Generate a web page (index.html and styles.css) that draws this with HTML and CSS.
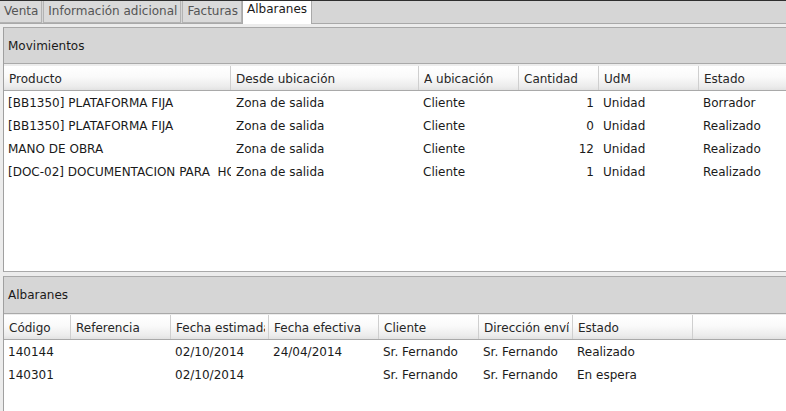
FILE: index.html
```html
<!DOCTYPE html>
<html lang="es">
<head>
<meta charset="utf-8">
<title>Albaranes</title>
<link rel="stylesheet" href="styles.css">
</head>
<body>
<div class="window">
  <div class="tabs">
    <div class="tab">Venta</div>
    <div class="tab">Información adicional</div>
    <div class="tab">Facturas</div>
    <div class="tab active">Albaranes</div>
  </div>
  <div class="content">
    <section class="group moves">
      <div class="group-title">Movimientos</div>
      <div class="table">
        <div class="row head cols-moves">
          <div class="cell"><span>Producto</span></div>
          <div class="cell"><span>Desde ubicación</span></div>
          <div class="cell"><span>A ubicación</span></div>
          <div class="cell"><span>Cantidad</span></div>
          <div class="cell"><span>UdM</span></div>
          <div class="cell"><span>Estado</span></div>
        </div>
        <div class="rows">
          <div class="row body cols-moves">
            <div class="cell">[BB1350] PLATAFORMA FIJA</div>
            <div class="cell">Zona de salida</div>
            <div class="cell">Cliente</div>
            <div class="cell num">1</div>
            <div class="cell">Unidad</div>
            <div class="cell">Borrador</div>
          </div>
          <div class="row body cols-moves">
            <div class="cell">[BB1350] PLATAFORMA FIJA</div>
            <div class="cell">Zona de salida</div>
            <div class="cell">Cliente</div>
            <div class="cell num">0</div>
            <div class="cell">Unidad</div>
            <div class="cell">Realizado</div>
          </div>
          <div class="row body cols-moves">
            <div class="cell">MANO DE OBRA</div>
            <div class="cell">Zona de salida</div>
            <div class="cell">Cliente</div>
            <div class="cell num">12</div>
            <div class="cell">Unidad</div>
            <div class="cell">Realizado</div>
          </div>
          <div class="row body cols-moves">
            <div class="cell">[DOC-02] DOCUMENTACION PARA  HOMOLOGACION</div>
            <div class="cell">Zona de salida</div>
            <div class="cell">Cliente</div>
            <div class="cell num">1</div>
            <div class="cell">Unidad</div>
            <div class="cell">Realizado</div>
          </div>
        </div>
      </div>
    </section>
    <section class="group shipments">
      <div class="group-title">Albaranes</div>
      <div class="table">
        <div class="row head cols-ship">
          <div class="cell"><span>Código</span></div>
          <div class="cell"><span>Referencia</span></div>
          <div class="cell"><span>Fecha estimada</span></div>
          <div class="cell"><span>Fecha efectiva</span></div>
          <div class="cell"><span>Cliente</span></div>
          <div class="cell"><span>Dirección envío</span></div>
          <div class="cell"><span>Estado</span></div>
          <div class="cell"><span></span></div>
        </div>
        <div class="rows">
          <div class="row body cols-ship">
            <div class="cell">140144</div>
            <div class="cell"></div>
            <div class="cell">02/10/2014</div>
            <div class="cell">24/04/2014</div>
            <div class="cell">Sr. Fernando</div>
            <div class="cell">Sr. Fernando</div>
            <div class="cell">Realizado</div>
            <div class="cell"></div>
          </div>
          <div class="row body cols-ship">
            <div class="cell">140301</div>
            <div class="cell"></div>
            <div class="cell">02/10/2014</div>
            <div class="cell"></div>
            <div class="cell">Sr. Fernando</div>
            <div class="cell">Sr. Fernando</div>
            <div class="cell">En espera</div>
            <div class="cell"></div>
          </div>
        </div>
      </div>
    </section>
  </div>
</div>
</body>
</html>
```

FILE: styles.css
```css
* { box-sizing: border-box; }

html, body {
  margin: 0;
  padding: 0;
  width: 786px;
  height: 411px;
  overflow: hidden;
  background: #ededed;
  font-family: "DejaVu Sans", "Liberation Sans", sans-serif;
  font-size: 12px;
  color: #1a1a1a;
}

.window {
  display: flex;
  flex-direction: column;
  height: 411px;
}

/* ---------- tabs ---------- */
.tabs {
  display: flex;
  align-items: flex-start;
  height: 24px;
  background: #d6d6d6;
  border-top: 1px solid #2e2e2e;
  border-bottom: 1px solid #a9a9a9;
  gap: 1px;
}

.tab {
  height: 22px;
  line-height: 20px;
  padding: 0 3px 0 4px;
  color: #555;
  background: #dadada;
  border: 1px solid #b3b3b3;
  border-top: none;
  white-space: nowrap;
}

.tab:first-child { border-left: none; }

.tab.active {
  height: 24px;
  margin-bottom: -1px;
  margin-left: -1px;
  line-height: 17px;
  background: #ffffff;
  color: #1a1a1a;
  border-color: #a9a9a9;
  border-bottom: none;
  padding: 0 4px 0 4px;
}

/* ---------- content ---------- */
.content {
  flex: 1;
  display: flex;
  flex-direction: column;
  padding: 3px 0 0 3px;
  gap: 4px;
  background: #ececec;
}

.group {
  display: flex;
  flex-direction: column;
  border-top: 1px solid #a9a9a9;
  border-left: 1px solid #a0a0a0;
  background: #ffffff;
}

.moves { height: 245px; border-bottom: 1px solid #a9a9a9; }
.shipments { flex: 1; }

.group-title {
  background: #d6d6d6;
  border-bottom: 1px solid #a9a9a9;
  padding-left: 4px;
  display: flex;
  align-items: center;
  color: #1a1a1a;
}

.moves .group-title { height: 36px; }
.shipments .group-title { height: 37px; }

.table {
  flex: 1;
  background: #ffffff;
  border-top: 2px solid #ececec;
}

.shipments .table { border-top-width: 1px; }

.row {
  display: grid;
}

.cols-moves { grid-template-columns: 227px 188px 100px 80px 100px 1fr; }
.cols-ship { grid-template-columns: 67px 100px 98px 110px 100px 94px 120px 1fr; }

.cell {
  overflow: hidden;
  white-space: pre;
}

.head {
  height: 25px;
  background: linear-gradient(#ffffff 0%, #fafafa 45%, #ececec 85%, #e2e2e2 100%);
  border-bottom: 1px solid #a9a9a9;
}

.head .cell {
  line-height: 22px;
  padding: 2px 3px 0 5px;
  border-right: 1px solid #cfcfcf;
  color: #262626;
}

.head .cell span {
  display: block;
  overflow: hidden;
}

.head .cell:last-child { border-right: none; }

.rows {
  padding-top: 1px;
}

.body {
  height: 23px;
}

.body .cell {
  line-height: 23px;
  padding-left: 4px;
}

.body .cell.num {
  text-align: right;
  padding-right: 5px;
  padding-left: 0;
}

.cols-moves.body .cell:nth-child(2) { padding-left: 5px; }
```
